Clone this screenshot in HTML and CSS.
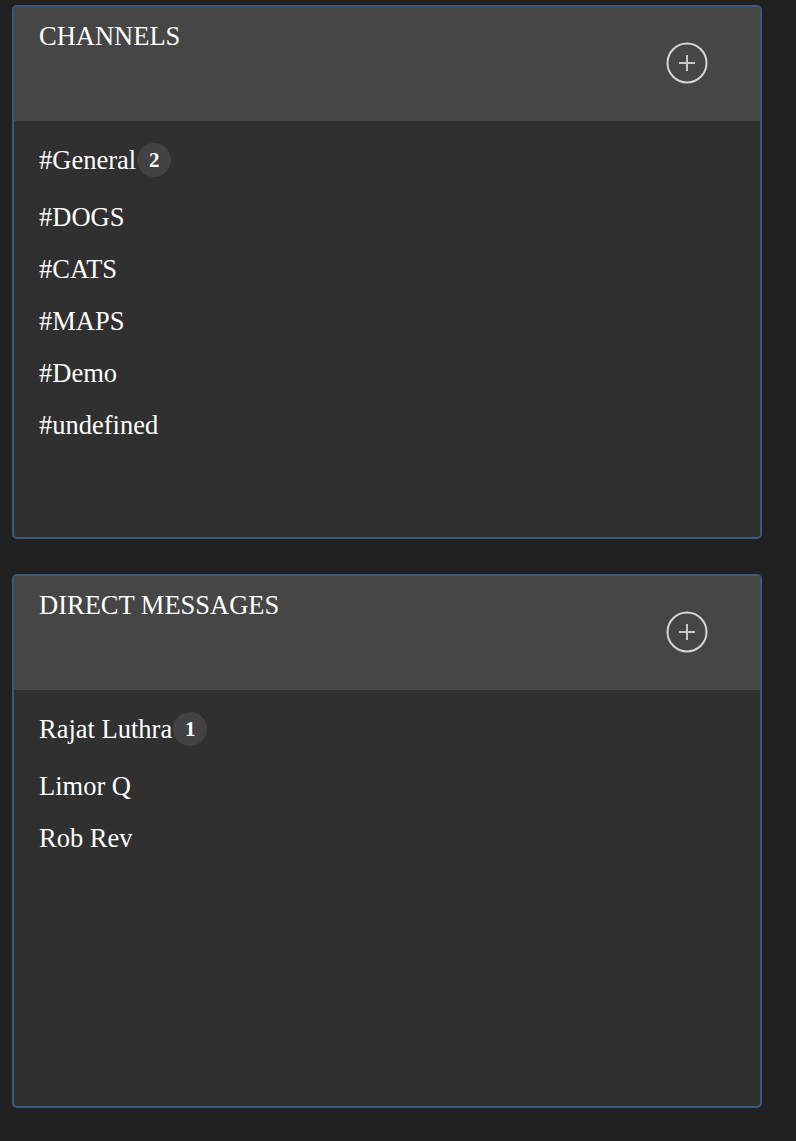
FILE: index.html
```html
<!DOCTYPE html>
<html>
<head>
<meta charset="utf-8">
<link rel="stylesheet" href="styles.css">
</head>
<body>
<div class="sidebar">
  <section class="panel">
    <header class="panel-head">
      <h2 class="panel-title">CHANNELS</h2>
      <button class="add-btn" aria-label="Add channel">
        <svg width="42" height="42" viewBox="0 0 42 42"><circle cx="21" cy="21" r="19.5" fill="none" stroke="#d6d6d6" stroke-width="2"/><path d="M21 13v16M13 21h16" stroke="#c8c8c8" stroke-width="2" fill="none"/></svg>
      </button>
    </header>
    <ul class="list">
      <li class="item">#General<span class="badge">2</span></li>
      <li class="item">#DOGS</li>
      <li class="item">#CATS</li>
      <li class="item">#MAPS</li>
      <li class="item">#Demo</li>
      <li class="item">#undefined</li>
    </ul>
  </section>
  <section class="panel">
    <header class="panel-head">
      <h2 class="panel-title">DIRECT MESSAGES</h2>
      <button class="add-btn" aria-label="Add message">
        <svg width="42" height="42" viewBox="0 0 42 42"><circle cx="21" cy="21" r="19.5" fill="none" stroke="#d6d6d6" stroke-width="2"/><path d="M21 13v16M13 21h16" stroke="#c8c8c8" stroke-width="2" fill="none"/></svg>
      </button>
    </header>
    <ul class="list">
      <li class="item">Rajat Luthra<span class="badge">1</span></li>
      <li class="item">Limor Q</li>
      <li class="item">Rob Rev</li>
    </ul>
  </section>
</div>
</body>
</html>
```
FILE: styles.css
```css
html, body {
  margin: 0;
  padding: 0;
  background: #212121;
}
body {
  font-family: "Liberation Serif", "Times New Roman", serif;
  color: #ffffff;
}
.sidebar {
  display: flex;
  flex-direction: column;
  gap: 35px;
  padding: 5px 0 0 12px;
  width: 750px;
}
.panel {
  box-sizing: border-box;
  height: 534px;
  border: 2px solid #3a5a82;
  border-radius: 5px;
  background: #303030;
  overflow: hidden;
}
.panel-head {
  box-sizing: border-box;
  height: 114px;
  background: #464646;
  display: flex;
  justify-content: space-between;
  align-items: center;
  padding: 0 52px 2px 25px;
}
.panel-title {
  align-self: flex-start;
  margin: 14px 0 0;
  font-size: 26.5px;
  font-weight: normal;
  line-height: 30px;
}
.add-btn {
  margin: 0;
  padding: 0;
  border: 0;
  background: none;
  width: 42px;
  height: 42px;
  display: block;
}
.add-btn svg { display: block; }
.list {
  list-style: none;
  margin: 0;
  padding: 22px 25px 0;
}
.item {
  display: flex;
  align-items: center;
  font-size: 26.5px;
  line-height: 30px;
  margin-bottom: 22px;
}
.item:first-child {
  margin-bottom: 25px;
}
.badge {
  display: inline-flex;
  align-items: center;
  justify-content: center;
  width: 34px;
  height: 34px;
  margin-left: 1px;
  border-radius: 50%;
  background: #424242;
  font-size: 21px;
  font-weight: bold;
}
```
